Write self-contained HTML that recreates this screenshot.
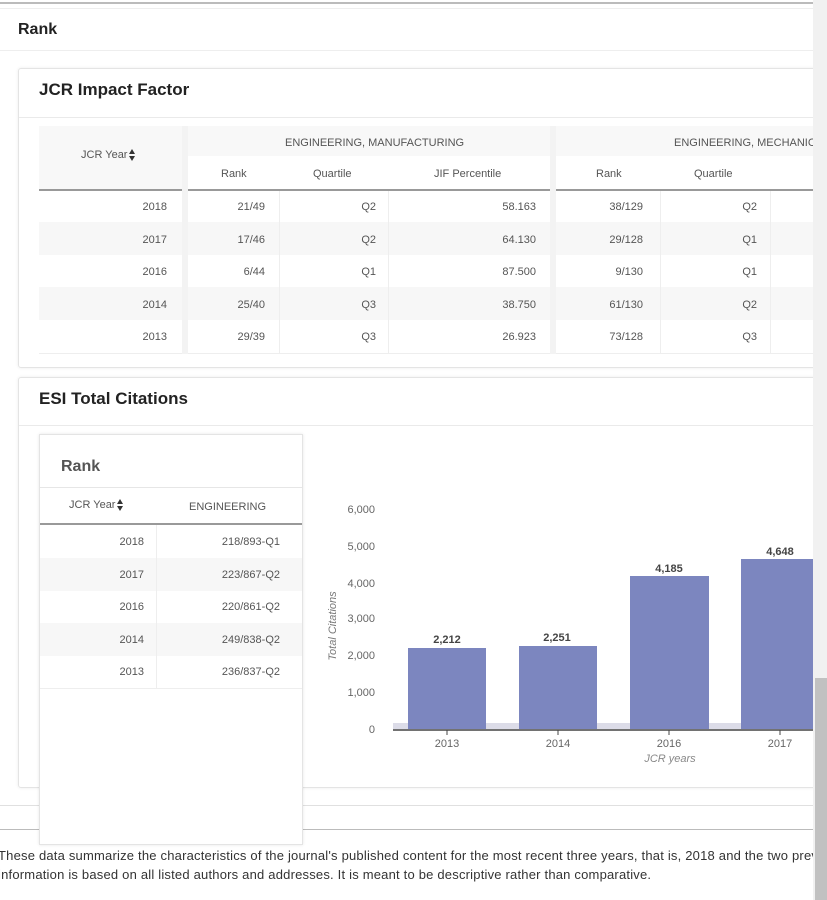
<!DOCTYPE html>
<html><head><meta charset="utf-8"><style>
*{margin:0;padding:0;box-sizing:border-box}
body{width:827px;height:900px;overflow:hidden;background:#fff;font-family:"Liberation Sans",Arial,sans-serif;color:#333;position:relative}
.a{position:absolute}
.clip{position:absolute;left:0;top:0;width:813px;height:900px;overflow:hidden}
.t{font-size:11px;color:#555;white-space:nowrap}
.hl{position:absolute;height:1px;background:#e6e6e6}
.vl{position:absolute;width:1px;background:#eee}
.srt{display:inline-block;vertical-align:middle;margin-left:2px;width:7px;height:12px;position:relative}
.srt:before{content:"";position:absolute;left:0;top:0;border-left:3.5px solid transparent;border-right:3.5px solid transparent;border-bottom:5px solid #333}
.srt:after{content:"";position:absolute;left:0;top:7px;border-left:3.5px solid transparent;border-right:3.5px solid transparent;border-top:5px solid #333}
</style></head><body>
<div class="clip">
<div class="hl" style="left:0;top:2px;width:813px;height:2px;background:#bbb"></div>
<div class="hl" style="left:0;top:8px;width:813px;background:#eee"></div>
<div class="a" style="left:18px;top:21px;font-size:16px;font-weight:bold;color:#222">Rank</div>
<div class="hl" style="left:0;top:50px;width:813px;background:#eee"></div>

<div class="a" style="left:18px;top:68px;width:820px;height:300px;border:1px solid #e4e4e4;border-radius:3px;box-shadow:0 0 3px rgba(0,0,0,.08)"></div>
<div class="a" style="left:39px;top:80px;font-size:17px;font-weight:bold;color:#222">JCR Impact Factor</div>
<div class="hl" style="left:19px;top:117px;width:800px;background:#eaeaea"></div>
<div class="a" style="left:39px;top:126px;width:143px;height:63px;background:#f8f8f8"></div>
<div class="a" style="left:188px;top:126px;width:362px;height:30px;background:#f8f8f8"></div>
<div class="a" style="left:556px;top:126px;width:260px;height:30px;background:#f8f8f8"></div>
<div class="a t" style="left:81px;top:149px">JCR Year<span class="srt"></span></div>
<div class="a t" style="left:285px;top:137px">ENGINEERING, MANUFACTURING</div>
<div class="a t" style="left:674px;top:137px">ENGINEERING, MECHANICAL</div>
<div class="a t" style="left:221px;top:168px">Rank</div>
<div class="a t" style="left:313px;top:168px">Quartile</div>
<div class="a t" style="left:434px;top:168px">JIF Percentile</div>
<div class="a t" style="left:596px;top:168px">Rank</div>
<div class="a t" style="left:694px;top:168px">Quartile</div>
<div class="hl" style="left:39px;top:189px;width:780px;height:2px;background:#999"></div>
<div class="a" style="left:39px;top:222px;width:780px;height:33px;background:#f7f7f7"></div>
<div class="a" style="left:39px;top:287px;width:780px;height:33px;background:#f7f7f7"></div>
<div class="hl" style="left:39px;top:353px;width:780px;background:#eee"></div>
<div class="vl" style="left:182px;top:126px;height:228px;width:6px;background:#f3f3f3"></div>
<div class="vl" style="left:550px;top:126px;height:228px;width:6px;background:#f3f3f3"></div>
<div class="vl" style="left:279px;top:191px;height:162px"></div>
<div class="vl" style="left:388px;top:191px;height:162px"></div>
<div class="vl" style="left:660px;top:191px;height:162px"></div>
<div class="vl" style="left:770px;top:191px;height:162px"></div>
<div id="jrows"></div>

<div class="a" style="left:18px;top:377px;width:820px;height:411px;border:1px solid #e4e4e4;border-radius:3px;box-shadow:0 0 3px rgba(0,0,0,.08)"></div>
<div class="a" style="left:39px;top:389px;font-size:17px;font-weight:bold;color:#222">ESI Total Citations</div>
<div class="hl" style="left:19px;top:425px;width:800px;background:#eaeaea"></div>

<div class="hl" style="left:0;top:805px;width:813px;background:#e0e0e0"></div>
<div class="hl" style="left:0;top:829px;width:813px;background:#bbb"></div>

<div class="a" style="left:39px;top:434px;width:264px;height:411px;background:#fff;border:1px solid #e4e4e4;box-shadow:0 0 3px rgba(0,0,0,.1)"></div>
<div class="a" style="left:61px;top:458px;font-size:16px;font-weight:bold;color:#555">Rank</div>
<div class="hl" style="left:40px;top:487px;width:262px;background:#e6e6e6"></div>
<div class="a t" style="left:69px;top:499px">JCR Year<span class="srt"></span></div>
<div class="a t" style="left:189px;top:501px">ENGINEERING</div>
<div class="hl" style="left:40px;top:523px;width:262px;height:2px;background:#999"></div>
<div class="a" style="left:40px;top:558px;width:262px;height:33px;background:#f7f7f7"></div>
<div class="a" style="left:40px;top:623px;width:262px;height:33px;background:#f7f7f7"></div>
<div class="hl" style="left:40px;top:688px;width:262px;background:#eee"></div>
<div class="vl" style="left:156px;top:525px;height:163px"></div>
<div id="erows"></div>

<svg class="a" style="left:0;top:0" width="813" height="900">
<g font-family="Liberation Sans,Arial,sans-serif" font-size="11" fill="#666" text-anchor="end">
<text x="375" y="513">6,000</text><text x="375" y="550">5,000</text><text x="375" y="587">4,000</text><text x="375" y="622">3,000</text><text x="375" y="659">2,000</text><text x="375" y="696">1,000</text><text x="375" y="733">0</text>
</g>
<text transform="translate(336,626) rotate(-90)" font-family="Liberation Sans,Arial,sans-serif" font-size="11" font-style="italic" fill="#777" text-anchor="middle">Total Citations</text>
<rect x="393" y="723" width="420" height="6" fill="#dcdce8"/>
<g fill="#7c86bf">
<rect x="408" y="648" width="78" height="81"/>
<rect x="519" y="646" width="78" height="83"/>
<rect x="630" y="576" width="79" height="153"/>
<rect x="741" y="559" width="80" height="170"/>
</g>
<line x1="393" y1="730" x2="813" y2="730" stroke="#444" stroke-width="1.5"/>
<g stroke="#444"><line x1="447" y1="730" x2="447" y2="735"/><line x1="558" y1="730" x2="558" y2="735"/><line x1="669" y1="730" x2="669" y2="735"/><line x1="780" y1="730" x2="780" y2="735"/></g>
<g font-family="Liberation Sans,Arial,sans-serif" font-size="11" text-anchor="middle">
<g fill="#444" font-weight="bold"><text x="447" y="643">2,212</text><text x="557" y="641">2,251</text><text x="669" y="572">4,185</text><text x="780" y="555">4,648</text></g>
<g fill="#666"><text x="447" y="747">2013</text><text x="558" y="747">2014</text><text x="669" y="747">2016</text><text x="780" y="747">2017</text></g>
<text x="670" y="762" fill="#888" font-style="italic">JCR years</text>
</g>
</svg>

<div class="a" style="left:-2px;top:846px;font-size:13px;letter-spacing:0.2px;color:#333;white-space:nowrap;line-height:19px">These data summarize the characteristics of the journal's published content for the most recent three years, that is, 2018 and the two previous years. This<br>information is based on all listed authors and addresses. It is meant to be descriptive rather than comparative.</div>
</div>
<div class="a" style="left:813px;top:0;width:14px;height:900px;background:#f1f1f1"></div>
<div class="a" style="left:815px;top:678px;width:12px;height:222px;background:#c1c1c1"></div>
<script>
var J=[["2018","21/49","Q2","58.163","38/129","Q2"],["2017","17/46","Q2","64.130","29/128","Q1"],["2016","6/44","Q1","87.500","9/130","Q1"],["2014","25/40","Q3","38.750","61/130","Q2"],["2013","29/39","Q3","26.923","73/128","Q3"]];
var R=[167,265,376,536,643,757],h="";
J.forEach(function(r,i){var y=201+i*32.5;r.forEach(function(c,j){h+='<div class="a t" style="left:'+(R[j]-80)+'px;width:80px;text-align:right;top:'+y+'px">'+c+'</div>'})});
document.getElementById("jrows").innerHTML=h;
var E=[["2018","218/893-Q1"],["2017","223/867-Q2"],["2016","220/861-Q2"],["2014","249/838-Q2"],["2013","236/837-Q2"]];h="";
E.forEach(function(r,i){var y=536+i*32.5;h+='<div class="a t" style="left:64px;width:80px;text-align:right;top:'+y+'px">'+r[0]+'</div><div class="a t" style="left:180px;width:100px;text-align:right;top:'+y+'px">'+r[1]+'</div>'});
document.getElementById("erows").innerHTML=h;
</script>
</body></html>
